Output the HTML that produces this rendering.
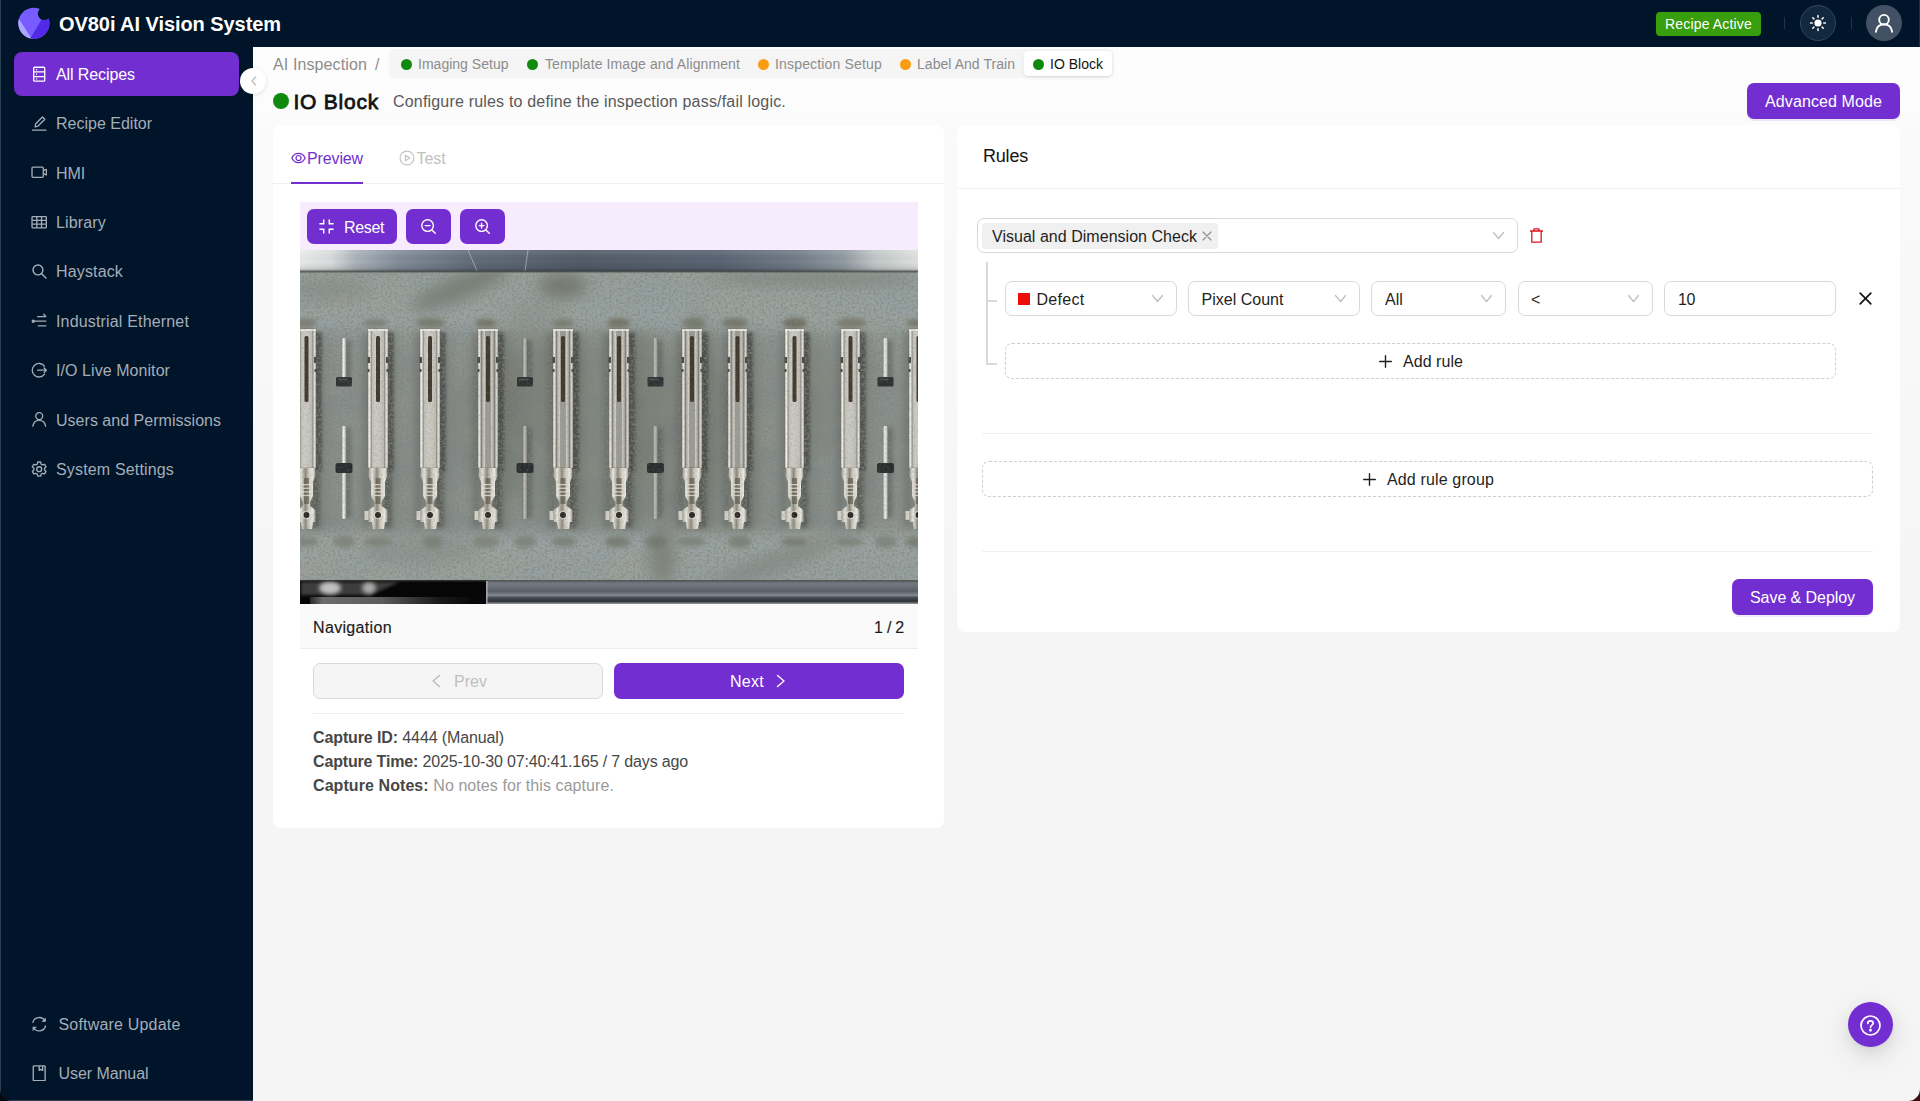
<!DOCTYPE html>
<html lang="en">
<head>
<meta charset="utf-8">
<title>OV80i AI Vision System</title>
<style>
*{box-sizing:border-box;margin:0;padding:0}
html,body{width:1920px;height:1101px;overflow:hidden;background:#f5f5f5;font-family:"Liberation Sans",sans-serif;font-size:16px;color:rgba(0,0,0,.88)}
.abs{position:absolute}
.t{position:absolute;white-space:nowrap;line-height:20px;height:20px;margin-top:1px}
#topbar{position:absolute;left:0;top:0;width:1920px;height:47px;background:#001529}
#side{position:absolute;left:0;top:47px;width:253px;height:1054px;background:#001529}
.mi{position:absolute;left:14px;width:225px;height:44px;border-radius:8px;color:#a4adb8}
.mi svg{position:absolute;left:17px;top:13.800px;width:16.400px;height:16.400px}
.mi .t{left:42px;top:12px}
.mi.sel{background:#722ed1;color:#fff}
#hdr{position:absolute;left:253px;top:47px;width:1667px;height:1054px;background:linear-gradient(#fdfdfd 0,#fcfcfc 60px,#fafafa 90px,#f5f5f5 560px)}
.card{position:absolute;background:#fff;border-radius:8px}
.pbtn{position:absolute;background:#722ed1;border-radius:7px;color:#fff}
.sel2{position:absolute;height:35.600px;margin-top:-.4px;border:1px solid #d9d9d9;border-radius:7px;background:#fff}
.sel2 .t{top:7px}
.sel2 svg.arr{position:absolute;right:12px;top:10px;width:13px;height:13px}
.dash{position:absolute;border:1px dashed #cdcdcd;border-radius:7px;background:#fff}
</style>
</head>
<body>
<!-- TOP BAR -->
<div id="topbar">
  <svg class="abs" style="left:17px;top:7px" width="34" height="34" viewBox="0 0 34 34">
    <defs><clipPath id="lg"><circle cx="16.900" cy="16.300" r="15.600"/></clipPath></defs>
    <g clip-path="url(#lg)">
      <rect width="34" height="34" fill="#785cff"/>
      <path d="M0 8.700 L2.200 12.200 L13.900 30.600 L13.900 34 L0 34Z" fill="#aba6ff"/>
      <path d="M13.900 30.600 L24.200 13 L34 12 L34 34 L13.900 34Z" fill="#5229e8"/>
    </g>
    <circle cx="27.200" cy="6.700" r="6.400" fill="#001529"/>
  </svg>
  <div class="t" style="letter-spacing:-0.065px;left:59px;top:12.500px;font-size:20px;font-weight:bold;color:#fff">OV80i AI Vision System</div>
  <div class="abs" style="left:1656px;top:12px;width:105px;height:24px;background:#389e0d;border-radius:4px"></div>
  <div class="t" style="letter-spacing:0.167px;left:1665px;top:13px;font-size:14px;color:#fff">Recipe Active</div>
  <div class="abs" style="left:1784px;top:17px;width:1px;height:12px;background:#1f3247"></div>
  <div class="abs" style="left:1851px;top:17px;width:1px;height:12px;background:#1f3247"></div>
  <div class="abs" style="left:1800px;top:5px;width:36px;height:36px;border-radius:50%;background:#11283f;border:1px solid #33475c"></div>
  <svg class="abs" style="left:1809px;top:14px" width="18" height="18" viewBox="0 0 18 18" fill="none" stroke="#fff" stroke-width="1.5" stroke-linecap="round">
    <circle cx="9" cy="9" r="3.6" fill="#fff" stroke="none"/>
    <path d="M9 1.6v1.6M9 14.8v1.6M1.6 9h1.6M14.8 9h1.6M3.8 3.8l1.1 1.1M13.1 13.1l1.1 1.1M3.8 14.2l1.1-1.1M13.1 4.9l1.1-1.1"/>
  </svg>
  <div class="abs" style="left:1866px;top:5px;width:36px;height:36px;border-radius:50%;background:#435164"></div>
  <div class="abs" style="left:1919px;top:0;width:1px;height:47px;background:#1c3148"></div>
  <svg class="abs" style="left:1874px;top:12px" width="20" height="22" viewBox="0 0 20 22" fill="none" stroke="#fff" stroke-width="1.9" stroke-linecap="round">
    <circle cx="10" cy="7.700" r="4.800"/><path d="M1.900 19.900c.6-4.800 3.900-7.500 8.100-7.500s7.500 2.700 8.100 7.500"/>
  </svg>
</div>

<!-- SIDEBAR -->
<div id="side">
  <div class="abs" style="left:0;top:-47px;width:1px;height:1101px;background:#2a3e55"></div>
  <div class="abs" style="left:0;bottom:0;width:253px;height:1px;background:#2a3e55"></div>
  <div class="mi sel" style="top:4.8px"><svg viewBox="0 0 16 16" fill="none" stroke="currentColor" stroke-width="1.3"><rect x="2.600" y="1.200" width="10.800" height="13.600" rx="1"/><path d="M2.600 5.700h10.800M2.600 10.300h10.800"/><path d="M4.800 3.500h1.200M4.800 8h1.200M4.800 12.500h1.200" stroke-width="1.200"/></svg><div class="t" style="letter-spacing:-0.094px">All Recipes</div></div>
  <div class="mi" style="top:54.2px"><svg viewBox="0 0 16 16" fill="none" stroke="currentColor" stroke-width="1.300" stroke-linejoin="round" stroke-linecap="round"><path d="M1.500 14.800h13"/><path d="M4 11.500l.6-3 6.600-6.600 2.300 2.300-6.600 6.600z"/></svg><div class="t">Recipe Editor</div></div>
  <div class="mi" style="top:103.6px"><svg viewBox="0 0 16 16" fill="none" stroke="currentColor" stroke-width="1.300" stroke-linejoin="round"><rect x="1" y="3" width="11" height="10" rx="1"/><path d="M12 6.500l3-1.200v5.400l-3-1.200"/></svg><div class="t" style="letter-spacing:-0.109px">HMI</div></div>
  <div class="mi" style="top:153.0px"><svg viewBox="0 0 16 16" fill="none" stroke="currentColor" stroke-width="1.300"><rect x="1" y="2.500" width="14" height="11" rx=".8"/><path d="M1 6.200h14M1 9.900h14M5.700 2.500v11M10.300 2.500v11"/></svg><div class="t" style="letter-spacing:0.156px">Library</div></div>
  <div class="mi" style="top:202.4px"><svg viewBox="0 0 16 16" fill="none" stroke="currentColor" stroke-width="1.400" stroke-linecap="round"><circle cx="6.800" cy="6.800" r="4.800"/><path d="M10.400 10.400l4.200 4.200"/></svg><div class="t" style="letter-spacing:0.150px">Haystack</div></div>
  <div class="mi" style="top:251.8px"><svg viewBox="0 0 16 16" fill="none" stroke="currentColor" stroke-width="1.300" stroke-linecap="round" stroke-linejoin="round"><path d="M6.500 3.500h8M12.300 1.300l2.200 2.200M3.500 8h11M7 12.500h7.500"/><circle cx="2.200" cy="8" r="1" fill="currentColor"/></svg><div class="t" style="letter-spacing:0.165px">Industrial Ethernet</div></div>
  <div class="mi" style="top:301.2px"><svg viewBox="0 0 16 16" fill="none" stroke="currentColor" stroke-width="1.300" stroke-linecap="round" stroke-linejoin="round"><path d="M13.200 4.200A6.600 6.600 0 1 0 13.200 11.800"/><path d="M6.500 8h8.500M12.800 5.800L15 8l-2.200 2.200"/></svg><div class="t" style="letter-spacing:0.066px">I/O Live Monitor</div></div>
  <div class="mi" style="top:350.6px"><svg viewBox="0 0 16 16" fill="none" stroke="currentColor" stroke-width="1.300" stroke-linecap="round"><circle cx="8" cy="5" r="3.400"/><path d="M1.800 14.800c.6-3.600 3-5.600 6.200-5.600s5.600 2 6.200 5.600"/></svg><div class="t" style="letter-spacing:0.024px">Users and Permissions</div></div>
  <div class="mi" style="top:400.0px"><svg viewBox="0 0 16 16" fill="none" stroke="currentColor" stroke-width="1.300" stroke-linejoin="round"><path d="M6.600 1h2.800l.5 2 1.400.8 2-.6 1.400 2.400-1.500 1.500v1.600l1.500 1.500-1.400 2.400-2-.6-1.400.8-.5 2H6.600l-.5-2-1.400-.8-2 .6-1.400-2.400 1.500-1.500V7.100L1.300 5.600l1.400-2.400 2 .6 1.400-.8z"/><circle cx="8" cy="8" r="2.400"/></svg><div class="t" style="letter-spacing:0.159px">System Settings</div></div>
  <div class="mi" style="top:955.3px"><svg style="left:16.500px" viewBox="0 0 16 16" fill="none" stroke="currentColor" stroke-width="1.300" stroke-linecap="round" stroke-linejoin="round"><path d="M1.800 6.200A6.400 6.400 0 0 1 13.600 4.800M14.200 9.800A6.400 6.400 0 0 1 2.400 11.200"/><path d="M13.900 2.200v2.900H11M2.100 13.800v-2.900H5" fill="currentColor" stroke-width="1"/></svg><div class="t" style="letter-spacing:0.188px;left:44.500px">Software Update</div></div>
  <div class="mi" style="top:1004.3px"><svg style="left:16.500px" viewBox="0 0 16 16" fill="none" stroke="currentColor" stroke-width="1.300" stroke-linejoin="round"><rect x="2.200" y=".8" width="11.600" height="14.400" rx=".6"/><path d="M8 1v4.200l1.700-1 1.700 1V1"/></svg><div class="t" style="letter-spacing:-0.064px;left:44.500px">User Manual</div></div>
</div>

<!-- HEADER STRIP -->
<div id="hdr"></div>
<div class="abs" style="left:240.200px;top:67.600px;width:26px;height:26px;border-radius:50%;background:#fff;box-shadow:0 1px 4px rgba(0,0,0,.12)"></div>
<svg class="abs" style="left:249px;top:74.500px" width="10" height="12" viewBox="0 0 10 12" fill="none" stroke="#bfbfbf" stroke-width="1.3" stroke-linecap="round" stroke-linejoin="round"><path d="M6.500 2 L3 6 L6.500 10"/></svg>

<div class="t" style="letter-spacing:0.115px;left:273px;top:53.500px;color:#8c8c8c">AI Inspection</div>
<div class="t" style="left:375px;top:53.500px;color:#8c8c8c">/</div>
<div class="abs" style="left:389px;top:49px;width:725px;height:29px;background:#f5f5f5;border-radius:6px"></div>
<div class="abs" style="left:1024px;top:51px;width:88px;height:25px;background:#fff;border-radius:4px;box-shadow:0 2px 6px -2px rgba(0,0,0,.1),0 1px 2px rgba(0,0,0,.06)"></div>
<div class="abs" style="left:400.5px;top:58.500px;width:11px;height:11px;border-radius:50%;background:#0f8a0f"></div>
<div class="t" style="letter-spacing:0.016px;left:418px;top:53px;font-size:14px;color:#8c8c8c">Imaging Setup</div>
<div class="abs" style="left:527.0px;top:58.500px;width:11px;height:11px;border-radius:50%;background:#0f8a0f"></div>
<div class="t" style="letter-spacing:0.099px;left:545px;top:53px;font-size:14px;color:#8c8c8c">Template Image and Alignment</div>
<div class="abs" style="left:757.5px;top:58.500px;width:11px;height:11px;border-radius:50%;background:#fa9d14"></div>
<div class="t" style="letter-spacing:0.169px;left:775px;top:53px;font-size:14px;color:#8c8c8c">Inspection Setup</div>
<div class="abs" style="left:899.5px;top:58.500px;width:11px;height:11px;border-radius:50%;background:#fa9d14"></div>
<div class="t" style="letter-spacing:0.047px;left:917px;top:53px;font-size:14px;color:#8c8c8c">Label And Train</div>
<div class="abs" style="left:1032.5px;top:58.500px;width:11px;height:11px;border-radius:50%;background:#0f8a0f"></div>
<div class="t" style="letter-spacing:0.012px;left:1050px;top:53px;font-size:14px;color:#141414">IO Block</div>

<div class="abs" style="left:273px;top:93px;width:16px;height:16px;border-radius:50%;background:#0f8a0f"></div>
<div class="t" style="letter-spacing:0.768px;left:293.500px;top:86.800px;font-size:21px;-webkit-text-stroke:.8px #141414;line-height:28px;height:28px;color:#141414">IO Block</div>
<div class="t" style="letter-spacing:0.185px;left:393px;top:90.500px;color:#595959">Configure rules to define the inspection pass/fail logic.</div>
<div class="pbtn" style="left:1747px;top:83px;width:153px;height:36px;box-shadow:0 2px 0 rgba(114,46,209,.1)"></div>
<div class="t" style="letter-spacing:0.105px;left:1765px;top:91px;color:#fff">Advanced Mode</div>

<!-- LEFT CARD -->
<div class="card" style="left:273px;top:125px;width:671px;height:703px"></div>
<div class="abs" style="left:273px;top:183px;width:671px;height:1px;background:#f0f0f0"></div>
<div class="abs" style="left:291px;top:181.500px;width:72px;height:2px;background:#722ed1"></div>
<svg class="abs" style="left:291px;top:151px" width="15" height="14" viewBox="0 0 15 14" fill="none" stroke="#722ed1" stroke-width="1.2"><path d="M.8 7C2.300 3.900 4.700 2.400 7.500 2.400S12.700 3.900 14.200 7c-1.500 3.100-3.900 4.600-6.700 4.600S2.300 10.100.8 7Z"/><circle cx="7.500" cy="7" r="2.500"/></svg>
<div class="t" style="letter-spacing:-0.129px;left:307px;top:148px;color:#722ed1">Preview</div>
<svg class="abs" style="left:399px;top:150px" width="16" height="16" viewBox="0 0 16 16" fill="none" stroke="#c4c4c4" stroke-width="1.2" stroke-linejoin="round"><circle cx="8" cy="8" r="6.900"/><path d="M6.400 5.200v5.600l4.400-2.800z"/></svg>
<div class="t" style="letter-spacing:-0.086px;left:416.500px;top:148px;color:#bfbfbf">Test</div>

<div class="abs" style="left:300px;top:202px;width:618px;height:48px;background:#f7ecfe"></div>
<div class="pbtn" style="left:307px;top:209px;width:90px;height:35px"></div>
<svg class="abs" style="left:319px;top:219px" width="15" height="15" viewBox="0 0 15 15" fill="none" stroke="#fff" stroke-width="1.500"><path d="M.4 4.700H4.700V.4M10.300 .4V4.700H14.600M14.600 10.300H10.300V14.600M4.700 14.600V10.300H.4"/></svg>
<div class="t" style="letter-spacing:-0.359px;left:344px;top:217px;color:#fff">Reset</div>
<div class="pbtn" style="left:406px;top:209px;width:45px;height:35px"></div>
<svg class="abs" style="left:420px;top:218px" width="17" height="17" viewBox="0 0 17 17" fill="none" stroke="#fff" stroke-width="1.400" stroke-linecap="round"><circle cx="7.600" cy="7.600" r="5.800"/><path d="M11.900 11.900l3.400 3.400M5.200 7.600h4.800"/></svg>
<div class="pbtn" style="left:460px;top:209px;width:45px;height:35px"></div>
<svg class="abs" style="left:474px;top:218px" width="17" height="17" viewBox="0 0 17 17" fill="none" stroke="#fff" stroke-width="1.400" stroke-linecap="round"><circle cx="7.600" cy="7.600" r="5.800"/><path d="M11.900 11.900l3.400 3.400M5.200 7.600h4.800M7.600 5.200v4.800"/></svg>

<svg class="abs" style="left:300px;top:250px" width="618" height="354" viewBox="0 0 618 354">
<defs>
<linearGradient id="tb" x1="0" x2="1" y1="0" y2="0">
 <stop offset="0" stop-color="#e9ebea"/><stop offset=".05" stop-color="#d8dcdc"/><stop offset=".09" stop-color="#a9b1b8"/>
 <stop offset=".16" stop-color="#808a97"/><stop offset=".28" stop-color="#5e6876"/><stop offset=".45" stop-color="#4f5865"/><stop offset=".68" stop-color="#566070"/>
 <stop offset=".8" stop-color="#6e7884"/><stop offset=".88" stop-color="#8f989f"/><stop offset=".93" stop-color="#c0c6c6"/><stop offset="1" stop-color="#dfe2e0"/>
</linearGradient>
<linearGradient id="tbv" x1="0" x2="0" y1="0" y2="1">
 <stop offset="0" stop-color="#fff" stop-opacity=".1"/><stop offset=".12" stop-color="#fff" stop-opacity=".08"/><stop offset=".55" stop-color="#000" stop-opacity="0"/>
 <stop offset=".8" stop-color="#000" stop-opacity=".08"/><stop offset="1" stop-color="#000" stop-opacity=".3"/>
</linearGradient>
<linearGradient id="slab" x1="0" x2="0" y1="0" y2="1">
 <stop offset="0" stop-color="#949e9e"/><stop offset=".15" stop-color="#98a2a3"/><stop offset=".3" stop-color="#8c9495"/><stop offset=".8" stop-color="#8b9394"/><stop offset=".88" stop-color="#99a3a4"/><stop offset="1" stop-color="#959fa0"/>
</linearGradient>
<linearGradient id="bb" x1="0" x2="0" y1="0" y2="1">
 <stop offset="0" stop-color="#6a6e77"/><stop offset=".15" stop-color="#737781"/><stop offset=".45" stop-color="#5a5e67"/><stop offset=".62" stop-color="#858991"/><stop offset=".72" stop-color="#4a4d55"/><stop offset=".88" stop-color="#303238"/><stop offset="1" stop-color="#6a6d73"/>
</linearGradient>
<linearGradient id="blk" x1="0" x2="1" y1="0" y2="0">
 <stop offset="0" stop-color="#2a2a2a"/><stop offset=".08" stop-color="#6c6c6c"/><stop offset=".45" stop-color="#5c5c5c"/><stop offset=".8" stop-color="#1a1a1a"/><stop offset="1" stop-color="#0a0a0a"/>
</linearGradient>
<linearGradient id="pinL" x1="0" x2="1" y1="0" y2="0">
 <stop offset="0" stop-color="#e9e8e3"/><stop offset=".1" stop-color="#eeede8"/><stop offset=".16" stop-color="#8f8c84"/><stop offset=".22" stop-color="#c2c0b9"/><stop offset=".36" stop-color="#cdcbc5"/>
 <stop offset=".64" stop-color="#c8c6c0"/><stop offset=".78" stop-color="#bdbbb4"/><stop offset=".84" stop-color="#8b8880"/><stop offset=".9" stop-color="#e8e7e2"/><stop offset="1" stop-color="#c9c7c0"/>
</linearGradient>
<linearGradient id="pinD" x1="0" x2="1" y1="0" y2="0">
 <stop offset="0" stop-color="#e2e1dc"/><stop offset=".1" stop-color="#e6e5e0"/><stop offset=".16" stop-color="#77756e"/><stop offset=".22" stop-color="#a9a8a1"/><stop offset=".32" stop-color="#d2d1cb"/><stop offset=".38" stop-color="#9c9b94"/>
 <stop offset=".62" stop-color="#9c9b94"/><stop offset=".68" stop-color="#cecdc7"/><stop offset=".78" stop-color="#a3a29b"/><stop offset=".84" stop-color="#77756e"/><stop offset=".9" stop-color="#dfded8"/><stop offset="1" stop-color="#bab8b1"/>
</linearGradient>
<linearGradient id="crimp" x1="0" x2="1" y1="0" y2="0">
 <stop offset="0" stop-color="#a9a69c"/><stop offset=".2" stop-color="#e8e6de"/><stop offset=".45" stop-color="#8c887c"/><stop offset=".6" stop-color="#c9c6bc"/><stop offset=".85" stop-color="#ebe9e2"/><stop offset="1" stop-color="#9b988e"/>
</linearGradient>
<linearGradient id="sp" x1="0" x2="1" y1="0" y2="0">
 <stop offset="0" stop-color="#8f8f8a"/><stop offset=".35" stop-color="#f0f0ec"/><stop offset=".7" stop-color="#cfcfca"/><stop offset="1" stop-color="#777"/>
</linearGradient>
<linearGradient id="spd" x1="0" x2="1" y1="0" y2="0">
 <stop offset="0" stop-color="#77776f"/><stop offset=".35" stop-color="#c2c2bc"/><stop offset=".7" stop-color="#a3a39d"/><stop offset="1" stop-color="#666"/>
</linearGradient>
<filter id="b15" x="-80%" y="-20%" width="260%" height="140%"><feGaussianBlur stdDeviation="1.600"/></filter>
<filter id="b2" x="-50%" y="-50%" width="200%" height="200%"><feGaussianBlur stdDeviation="2"/></filter>
<filter id="b4" x="-50%" y="-50%" width="200%" height="200%"><feGaussianBlur stdDeviation="4"/></filter>
<filter id="b7" x="-50%" y="-50%" width="200%" height="200%"><feGaussianBlur stdDeviation="7"/></filter>
<filter id="grain" x="0" y="0" width="100%" height="100%">
 <feTurbulence type="fractalNoise" baseFrequency=".42" numOctaves="4" seed="3" result="n"/>
 <feColorMatrix type="matrix" values="0 0 0 0 0.22  0 0 0 0 0.23  0 0 0 0 0.19  2.2 2.2 2.2 0 -3.05"/>
</filter>
<filter id="cloud" x="0" y="0" width="100%" height="100%">
 <feTurbulence type="fractalNoise" baseFrequency=".018 .03" numOctaves="3" seed="11"/>
 <feColorMatrix type="matrix" values="0 0 0 0 0.36  0 0 0 0 0.37  0 0 0 0 0.31  1.6 1.2 0 0 -1.15"/>
</filter>
<clipPath id="pc"><rect width="618" height="354"/></clipPath>
</defs>
<g clip-path="url(#pc)">
<rect x="0" y="20" width="618" height="312" fill="url(#slab)"/>
<rect x="0" y="20" width="618" height="312" filter="url(#cloud)" opacity=".55"/>
<ellipse cx="300" cy="175" rx="150" ry="95" fill="#66685c" opacity=".16" filter="url(#b7)"/>
<ellipse cx="235" cy="120" rx="45" ry="70" fill="#66685c" opacity=".15" filter="url(#b7)"/>
<ellipse cx="400" cy="200" rx="60" ry="80" fill="#66685c" opacity=".12" filter="url(#b7)"/>
<rect x="0" y="82" width="618" height="200" fill="#5f6156" opacity=".1" filter="url(#b4)"/>
<ellipse cx="160" cy="38" rx="52" ry="11" transform="rotate(-22 160 38)" fill="#5f6355" opacity="0.55" filter="url(#b7)"/>
<ellipse cx="262" cy="36" rx="24" ry="13" transform="rotate(0 262 36)" fill="#5f6355" opacity="0.62" filter="url(#b7)"/>
<ellipse cx="510" cy="29" rx="105" ry="6" transform="rotate(0 510 29)" fill="#5f6355" opacity="0.4" filter="url(#b7)"/>
<ellipse cx="30" cy="40" rx="40" ry="12" transform="rotate(0 30 40)" fill="#5f6355" opacity="0.2" filter="url(#b7)"/>
<ellipse cx="362" cy="305" rx="14" ry="30" transform="rotate(0 362 305)" fill="#5f6355" opacity="0.45" filter="url(#b7)"/>
<ellipse cx="400" cy="100" rx="10" ry="40" transform="rotate(0 400 100)" fill="#5f6355" opacity="0.25" filter="url(#b7)"/>
<ellipse cx="345" cy="150" rx="18" ry="70" transform="rotate(0 345 150)" fill="#5f6355" opacity="0.18" filter="url(#b7)"/>
<ellipse cx="520" cy="150" rx="18" ry="60" transform="rotate(0 520 150)" fill="#5f6355" opacity="0.15" filter="url(#b7)"/>
<ellipse cx="215" cy="180" rx="14" ry="70" transform="rotate(0 215 180)" fill="#5f6355" opacity="0.18" filter="url(#b7)"/>
<ellipse cx="120" cy="300" rx="60" ry="14" transform="rotate(0 120 300)" fill="#5f6355" opacity="0.2" filter="url(#b7)"/>
<ellipse cx="480" cy="310" rx="70" ry="10" transform="rotate(-20 480 310)" fill="#5f6355" opacity="0.3" filter="url(#b7)"/>
<ellipse cx="5.4" cy="73" rx="10.8" ry="4.8" fill="#5e5a44" opacity="0.47" filter="url(#b2)"/>
<ellipse cx="6.7" cy="292" rx="11.8" ry="4.2" fill="#5c5f4e" opacity="0.43" filter="url(#b2)"/>
<ellipse cx="75.2" cy="73" rx="12.2" ry="3.6" fill="#5e5a44" opacity="0.47" filter="url(#b2)"/>
<ellipse cx="77.5" cy="292" rx="14.1" ry="4.4" fill="#5c5f4e" opacity="0.36" filter="url(#b2)"/>
<ellipse cx="130.8" cy="73" rx="14.7" ry="4.7" fill="#5e5a44" opacity="0.55" filter="url(#b2)"/>
<ellipse cx="132.9" cy="292" rx="10.2" ry="6.6" fill="#5c5f4e" opacity="0.37" filter="url(#b2)"/>
<ellipse cx="185.9" cy="73" rx="10.6" ry="4.1" fill="#5e5a44" opacity="0.65" filter="url(#b2)"/>
<ellipse cx="186.1" cy="292" rx="12.9" ry="5.9" fill="#5c5f4e" opacity="0.39" filter="url(#b2)"/>
<ellipse cx="263.3" cy="73" rx="10.3" ry="3.6" fill="#5e5a44" opacity="0.50" filter="url(#b2)"/>
<ellipse cx="264.1" cy="292" rx="12.1" ry="4.9" fill="#5c5f4e" opacity="0.45" filter="url(#b2)"/>
<ellipse cx="318.7" cy="73" rx="11.5" ry="5.1" fill="#5e5a44" opacity="0.62" filter="url(#b2)"/>
<ellipse cx="317.5" cy="292" rx="12.9" ry="5.6" fill="#5c5f4e" opacity="0.52" filter="url(#b2)"/>
<ellipse cx="393.4" cy="73" rx="11.4" ry="5.5" fill="#5e5a44" opacity="0.48" filter="url(#b2)"/>
<ellipse cx="391.5" cy="292" rx="13.8" ry="4.5" fill="#5c5f4e" opacity="0.42" filter="url(#b2)"/>
<ellipse cx="434.7" cy="73" rx="13.3" ry="5.0" fill="#5e5a44" opacity="0.59" filter="url(#b2)"/>
<ellipse cx="439.8" cy="292" rx="11.6" ry="6.1" fill="#5c5f4e" opacity="0.45" filter="url(#b2)"/>
<ellipse cx="495.0" cy="73" rx="12.3" ry="5.2" fill="#5e5a44" opacity="0.69" filter="url(#b2)"/>
<ellipse cx="494.3" cy="292" rx="13.3" ry="4.2" fill="#5c5f4e" opacity="0.48" filter="url(#b2)"/>
<ellipse cx="551.4" cy="73" rx="15.0" ry="5.1" fill="#5e5a44" opacity="0.52" filter="url(#b2)"/>
<ellipse cx="549.8" cy="292" rx="13.3" ry="4.1" fill="#5c5f4e" opacity="0.42" filter="url(#b2)"/>
<ellipse cx="616.5" cy="73" rx="10.6" ry="3.6" fill="#5e5a44" opacity="0.64" filter="url(#b2)"/>
<ellipse cx="616.3" cy="292" rx="11.2" ry="5.2" fill="#5c5f4e" opacity="0.52" filter="url(#b2)"/>
<ellipse cx="44.0" cy="292" rx="11" ry="6" fill="#5c5f4e" opacity=".4" filter="url(#b2)"/>
<ellipse cx="225.0" cy="292" rx="11" ry="6" fill="#5c5f4e" opacity=".4" filter="url(#b2)"/>
<ellipse cx="355.5" cy="292" rx="11" ry="6" fill="#5c5f4e" opacity=".4" filter="url(#b2)"/>
<ellipse cx="585.5" cy="292" rx="11" ry="6" fill="#5c5f4e" opacity=".4" filter="url(#b2)"/>
<rect x="-10" y="84" width="38" height="196" fill="#5a5c50" opacity="0.17" filter="url(#b4)"/>
<rect x="14" y="82" width="8" height="140" fill="#3a3e3a" opacity=".7" filter="url(#b15)"/>
<rect x="11" y="222" width="9" height="56" fill="#3a3e3a" opacity=".55" filter="url(#b2)"/>
<rect x="-8" y="82" width="7" height="195" fill="#4a4f4f" opacity=".22" filter="url(#b2)"/>
<rect x="61" y="84" width="39" height="196" fill="#5a5c50" opacity="0.17" filter="url(#b4)"/>
<rect x="86" y="82" width="8" height="140" fill="#3a3e3a" opacity=".7" filter="url(#b15)"/>
<rect x="83" y="222" width="9" height="56" fill="#3a3e3a" opacity=".55" filter="url(#b2)"/>
<rect x="63" y="82" width="7" height="195" fill="#4a4f4f" opacity=".22" filter="url(#b2)"/>
<rect x="113" y="84" width="39" height="196" fill="#5a5c50" opacity="0.17" filter="url(#b4)"/>
<rect x="138" y="82" width="8" height="140" fill="#3a3e3a" opacity=".7" filter="url(#b15)"/>
<rect x="135" y="222" width="9" height="56" fill="#3a3e3a" opacity=".55" filter="url(#b2)"/>
<rect x="115" y="82" width="7" height="195" fill="#4a4f4f" opacity=".22" filter="url(#b2)"/>
<rect x="171" y="84" width="39" height="196" fill="#5a5c50" opacity="0.27" filter="url(#b4)"/>
<rect x="196" y="82" width="8" height="140" fill="#3a3e3a" opacity=".7" filter="url(#b15)"/>
<rect x="193" y="222" width="9" height="56" fill="#3a3e3a" opacity=".55" filter="url(#b2)"/>
<rect x="173" y="82" width="7" height="195" fill="#4a4f4f" opacity=".22" filter="url(#b2)"/>
<rect x="246" y="84" width="39" height="196" fill="#5a5c50" opacity="0.27" filter="url(#b4)"/>
<rect x="271" y="82" width="8" height="140" fill="#3a3e3a" opacity=".7" filter="url(#b15)"/>
<rect x="268" y="222" width="9" height="56" fill="#3a3e3a" opacity=".55" filter="url(#b2)"/>
<rect x="248" y="82" width="7" height="195" fill="#4a4f4f" opacity=".22" filter="url(#b2)"/>
<rect x="302" y="84" width="39" height="196" fill="#5a5c50" opacity="0.27" filter="url(#b4)"/>
<rect x="327" y="82" width="8" height="140" fill="#3a3e3a" opacity=".7" filter="url(#b15)"/>
<rect x="324" y="222" width="9" height="56" fill="#3a3e3a" opacity=".55" filter="url(#b2)"/>
<rect x="304" y="82" width="7" height="195" fill="#4a4f4f" opacity=".22" filter="url(#b2)"/>
<rect x="375" y="84" width="39" height="196" fill="#5a5c50" opacity="0.27" filter="url(#b4)"/>
<rect x="400" y="82" width="8" height="140" fill="#3a3e3a" opacity=".7" filter="url(#b15)"/>
<rect x="397" y="222" width="9" height="56" fill="#3a3e3a" opacity=".55" filter="url(#b2)"/>
<rect x="377" y="82" width="7" height="195" fill="#4a4f4f" opacity=".22" filter="url(#b2)"/>
<rect x="421" y="84" width="38" height="196" fill="#5a5c50" opacity="0.27" filter="url(#b4)"/>
<rect x="445" y="82" width="8" height="140" fill="#3a3e3a" opacity=".7" filter="url(#b15)"/>
<rect x="442" y="222" width="9" height="56" fill="#3a3e3a" opacity=".55" filter="url(#b2)"/>
<rect x="423" y="82" width="7" height="195" fill="#4a4f4f" opacity=".22" filter="url(#b2)"/>
<rect x="478" y="84" width="38" height="196" fill="#5a5c50" opacity="0.17" filter="url(#b4)"/>
<rect x="502" y="82" width="8" height="140" fill="#3a3e3a" opacity=".7" filter="url(#b15)"/>
<rect x="499" y="222" width="9" height="56" fill="#3a3e3a" opacity=".55" filter="url(#b2)"/>
<rect x="480" y="82" width="7" height="195" fill="#4a4f4f" opacity=".22" filter="url(#b2)"/>
<rect x="534" y="84" width="38" height="196" fill="#5a5c50" opacity="0.17" filter="url(#b4)"/>
<rect x="558" y="82" width="8" height="140" fill="#3a3e3a" opacity=".7" filter="url(#b15)"/>
<rect x="555" y="222" width="9" height="56" fill="#3a3e3a" opacity=".55" filter="url(#b2)"/>
<rect x="536" y="82" width="7" height="195" fill="#4a4f4f" opacity=".22" filter="url(#b2)"/>
<rect x="602" y="84" width="38" height="196" fill="#5a5c50" opacity="0.17" filter="url(#b4)"/>
<rect x="626" y="82" width="8" height="140" fill="#3a3e3a" opacity=".7" filter="url(#b15)"/>
<rect x="623" y="222" width="9" height="56" fill="#3a3e3a" opacity=".55" filter="url(#b2)"/>
<rect x="604" y="82" width="7" height="195" fill="#4a4f4f" opacity=".22" filter="url(#b2)"/>
<rect x="44" y="90" width="7" height="40" fill="#3f4444" opacity=".45" filter="url(#b2)"/>
<rect x="44" y="178" width="7" height="90" fill="#3f4444" opacity=".45" filter="url(#b2)"/>
<rect x="225" y="90" width="7" height="40" fill="#3f4444" opacity=".45" filter="url(#b2)"/>
<rect x="225" y="178" width="7" height="90" fill="#3f4444" opacity=".45" filter="url(#b2)"/>
<rect x="355.5" y="90" width="7" height="40" fill="#3f4444" opacity=".45" filter="url(#b2)"/>
<rect x="355.5" y="178" width="7" height="90" fill="#3f4444" opacity=".45" filter="url(#b2)"/>
<rect x="585.5" y="90" width="7" height="40" fill="#3f4444" opacity=".45" filter="url(#b2)"/>
<rect x="585.5" y="178" width="7" height="90" fill="#3f4444" opacity=".45" filter="url(#b2)"/>
<rect x="0" y="20" width="618" height="312" filter="url(#grain)" opacity=".55"/>
<rect x="41.5" y="88" width="5" height="42" rx="2" fill="url(#sp)"/>
<rect x="36" y="127" width="16" height="9.500" rx="1.500" fill="#2e3032"/>
<rect x="38" y="128.500" width="9" height="2" fill="#55585a" opacity=".7"/>
<rect x="41.5" y="176" width="5" height="93" rx="2" fill="url(#sp)"/>
<rect x="35.5" y="213" width="17" height="10" rx="2" fill="#2a2c2e"/>
<rect x="222.5" y="88" width="5" height="42" rx="2" fill="url(#spd)"/>
<rect x="217" y="127" width="16" height="9.500" rx="1.500" fill="#2e3032"/>
<rect x="219" y="128.500" width="9" height="2" fill="#55585a" opacity=".7"/>
<rect x="222.5" y="176" width="5" height="93" rx="2" fill="url(#spd)"/>
<rect x="216.5" y="213" width="17" height="10" rx="2" fill="#2a2c2e"/>
<rect x="353.0" y="88" width="5" height="42" rx="2" fill="url(#spd)"/>
<rect x="347.5" y="127" width="16" height="9.500" rx="1.500" fill="#2e3032"/>
<rect x="349.5" y="128.500" width="9" height="2" fill="#55585a" opacity=".7"/>
<rect x="353.0" y="176" width="5" height="93" rx="2" fill="url(#spd)"/>
<rect x="347.0" y="213" width="17" height="10" rx="2" fill="#2a2c2e"/>
<rect x="583.0" y="88" width="5" height="42" rx="2" fill="url(#sp)"/>
<rect x="577.5" y="127" width="16" height="9.500" rx="1.500" fill="#2e3032"/>
<rect x="579.5" y="128.500" width="9" height="2" fill="#55585a" opacity=".7"/>
<rect x="583.0" y="176" width="5" height="93" rx="2" fill="url(#sp)"/>
<rect x="577.0" y="213" width="17" height="10" rx="2" fill="#2a2c2e"/>
<rect x="-3" y="79" width="19" height="139" fill="url(#pinL)" stroke="#5d5b53" stroke-width=".6" stroke-opacity=".7"/>
<rect x="-3" y="79" width="19" height="2" fill="#f2f1ec" opacity=".8"/>
<rect x="4.5" y="86" width="4" height="66" rx="1.500" fill="#40392e"/>
<rect x="-3.5" y="107" width="2.500" height="6" fill="#4a4a44"/><rect x="14" y="107" width="2.500" height="6" fill="#4a4a44"/>
<rect x="-3.5" y="119" width="2" height="3" fill="#4a4a44"/><rect x="14.5" y="119" width="2" height="3" fill="#4a4a44"/>
<path d="M-2 218 H15 L15.5 226 L13 232 L13 246 L10.0 252 L10.0 256 L15.5 260 L15.5 272 L13 272 L12 279 L2 279 L1 272 L-2.5 272 L-2.5 260 L3.0 256 L3.0 252 L0 246 L0 232 L-2.5 226 Z" fill="url(#crimp)"/>
<rect x="4.0" y="228" width="5" height="26" fill="#5e5a4c" opacity=".7"/>
<rect x="1.5" y="234.0" width="10" height="1.300" fill="#e4e2da" opacity=".85"/>
<rect x="1.5" y="237.6" width="10" height="1.300" fill="#e4e2da" opacity=".85"/>
<rect x="1.5" y="241.2" width="10" height="1.300" fill="#e4e2da" opacity=".85"/>
<rect x="1.5" y="244.8" width="10" height="1.300" fill="#e4e2da" opacity=".85"/>
<circle cx="6.5" cy="265" r="3" fill="#2c2a26"/>
<circle cx="6.5" cy="265" r="3.800" fill="none" stroke="#efeee8" stroke-width=".8" opacity=".8"/>
<rect x="-6.5" y="261" width="4" height="9" fill="#d4d2ca"/>
<rect x="68" y="79" width="20" height="139" fill="url(#pinL)" stroke="#5d5b53" stroke-width=".6" stroke-opacity=".7"/>
<rect x="68" y="79" width="20" height="2" fill="#f2f1ec" opacity=".8"/>
<rect x="76.0" y="86" width="4" height="66" rx="1.500" fill="#40392e"/>
<rect x="67.5" y="107" width="2.500" height="6" fill="#4a4a44"/><rect x="86" y="107" width="2.500" height="6" fill="#4a4a44"/>
<rect x="67.5" y="119" width="2" height="3" fill="#4a4a44"/><rect x="86.5" y="119" width="2" height="3" fill="#4a4a44"/>
<path d="M69 218 H87 L87.5 226 L85 232 L85 246 L81.5 252 L81.5 256 L87.5 260 L87.5 272 L85 272 L84 279 L73 279 L72 272 L68.5 272 L68.5 260 L74.5 256 L74.5 252 L71 246 L71 232 L68.5 226 Z" fill="url(#crimp)"/>
<rect x="75.5" y="228" width="5" height="26" fill="#5e5a4c" opacity=".7"/>
<rect x="73.0" y="234.0" width="10" height="1.300" fill="#e4e2da" opacity=".85"/>
<rect x="73.0" y="237.6" width="10" height="1.300" fill="#e4e2da" opacity=".85"/>
<rect x="73.0" y="241.2" width="10" height="1.300" fill="#e4e2da" opacity=".85"/>
<rect x="73.0" y="244.8" width="10" height="1.300" fill="#e4e2da" opacity=".85"/>
<circle cx="78.0" cy="265" r="3" fill="#2c2a26"/>
<circle cx="78.0" cy="265" r="3.800" fill="none" stroke="#efeee8" stroke-width=".8" opacity=".8"/>
<rect x="64.5" y="261" width="4" height="9" fill="#d4d2ca"/>
<rect x="120" y="79" width="20" height="139" fill="url(#pinL)" stroke="#5d5b53" stroke-width=".6" stroke-opacity=".7"/>
<rect x="120" y="79" width="20" height="2" fill="#f2f1ec" opacity=".8"/>
<rect x="128.0" y="86" width="4" height="66" rx="1.500" fill="#40392e"/>
<rect x="119.5" y="107" width="2.500" height="6" fill="#4a4a44"/><rect x="138" y="107" width="2.500" height="6" fill="#4a4a44"/>
<rect x="119.5" y="119" width="2" height="3" fill="#4a4a44"/><rect x="138.5" y="119" width="2" height="3" fill="#4a4a44"/>
<path d="M121 218 H139 L139.5 226 L137 232 L137 246 L133.5 252 L133.5 256 L139.5 260 L139.5 272 L137 272 L136 279 L125 279 L124 272 L120.5 272 L120.5 260 L126.5 256 L126.5 252 L123 246 L123 232 L120.5 226 Z" fill="url(#crimp)"/>
<rect x="127.5" y="228" width="5" height="26" fill="#5e5a4c" opacity=".7"/>
<rect x="125.0" y="234.0" width="10" height="1.300" fill="#e4e2da" opacity=".85"/>
<rect x="125.0" y="237.6" width="10" height="1.300" fill="#e4e2da" opacity=".85"/>
<rect x="125.0" y="241.2" width="10" height="1.300" fill="#e4e2da" opacity=".85"/>
<rect x="125.0" y="244.8" width="10" height="1.300" fill="#e4e2da" opacity=".85"/>
<circle cx="130.0" cy="265" r="3" fill="#2c2a26"/>
<circle cx="130.0" cy="265" r="3.800" fill="none" stroke="#efeee8" stroke-width=".8" opacity=".8"/>
<rect x="116.5" y="261" width="4" height="9" fill="#d4d2ca"/>
<rect x="178" y="79" width="20" height="139" fill="url(#pinD)" stroke="#5d5b53" stroke-width=".6" stroke-opacity=".7"/>
<rect x="178" y="79" width="20" height="2" fill="#f2f1ec" opacity=".8"/>
<rect x="186.0" y="86" width="4" height="66" rx="1.500" fill="#40392e"/>
<rect x="177.5" y="107" width="2.500" height="6" fill="#4a4a44"/><rect x="196" y="107" width="2.500" height="6" fill="#4a4a44"/>
<rect x="177.5" y="119" width="2" height="3" fill="#4a4a44"/><rect x="196.5" y="119" width="2" height="3" fill="#4a4a44"/>
<path d="M179 218 H197 L197.5 226 L195 232 L195 246 L191.5 252 L191.5 256 L197.5 260 L197.5 272 L195 272 L194 279 L183 279 L182 272 L178.5 272 L178.5 260 L184.5 256 L184.5 252 L181 246 L181 232 L178.5 226 Z" fill="url(#crimp)"/>
<rect x="185.5" y="228" width="5" height="26" fill="#5e5a4c" opacity=".7"/>
<rect x="183.0" y="234.0" width="10" height="1.300" fill="#e4e2da" opacity=".85"/>
<rect x="183.0" y="237.6" width="10" height="1.300" fill="#e4e2da" opacity=".85"/>
<rect x="183.0" y="241.2" width="10" height="1.300" fill="#e4e2da" opacity=".85"/>
<rect x="183.0" y="244.8" width="10" height="1.300" fill="#e4e2da" opacity=".85"/>
<circle cx="188.0" cy="265" r="3" fill="#2c2a26"/>
<circle cx="188.0" cy="265" r="3.800" fill="none" stroke="#efeee8" stroke-width=".8" opacity=".8"/>
<rect x="174.5" y="261" width="4" height="9" fill="#d4d2ca"/>
<rect x="253" y="79" width="20" height="139" fill="url(#pinD)" stroke="#5d5b53" stroke-width=".6" stroke-opacity=".7"/>
<rect x="253" y="79" width="20" height="2" fill="#f2f1ec" opacity=".8"/>
<rect x="261.0" y="86" width="4" height="66" rx="1.500" fill="#40392e"/>
<rect x="252.5" y="107" width="2.500" height="6" fill="#4a4a44"/><rect x="271" y="107" width="2.500" height="6" fill="#4a4a44"/>
<rect x="252.5" y="119" width="2" height="3" fill="#4a4a44"/><rect x="271.5" y="119" width="2" height="3" fill="#4a4a44"/>
<path d="M254 218 H272 L272.5 226 L270 232 L270 246 L266.5 252 L266.5 256 L272.5 260 L272.5 272 L270 272 L269 279 L258 279 L257 272 L253.5 272 L253.5 260 L259.5 256 L259.5 252 L256 246 L256 232 L253.5 226 Z" fill="url(#crimp)"/>
<rect x="260.5" y="228" width="5" height="26" fill="#5e5a4c" opacity=".7"/>
<rect x="258.0" y="234.0" width="10" height="1.300" fill="#e4e2da" opacity=".85"/>
<rect x="258.0" y="237.6" width="10" height="1.300" fill="#e4e2da" opacity=".85"/>
<rect x="258.0" y="241.2" width="10" height="1.300" fill="#e4e2da" opacity=".85"/>
<rect x="258.0" y="244.8" width="10" height="1.300" fill="#e4e2da" opacity=".85"/>
<circle cx="263.0" cy="265" r="3" fill="#2c2a26"/>
<circle cx="263.0" cy="265" r="3.800" fill="none" stroke="#efeee8" stroke-width=".8" opacity=".8"/>
<rect x="249.5" y="261" width="4" height="9" fill="#d4d2ca"/>
<rect x="309" y="79" width="20" height="139" fill="url(#pinD)" stroke="#5d5b53" stroke-width=".6" stroke-opacity=".7"/>
<rect x="309" y="79" width="20" height="2" fill="#f2f1ec" opacity=".8"/>
<rect x="317.0" y="86" width="4" height="66" rx="1.500" fill="#40392e"/>
<rect x="308.5" y="107" width="2.500" height="6" fill="#4a4a44"/><rect x="327" y="107" width="2.500" height="6" fill="#4a4a44"/>
<rect x="308.5" y="119" width="2" height="3" fill="#4a4a44"/><rect x="327.5" y="119" width="2" height="3" fill="#4a4a44"/>
<path d="M310 218 H328 L328.5 226 L326 232 L326 246 L322.5 252 L322.5 256 L328.5 260 L328.5 272 L326 272 L325 279 L314 279 L313 272 L309.5 272 L309.5 260 L315.5 256 L315.5 252 L312 246 L312 232 L309.5 226 Z" fill="url(#crimp)"/>
<rect x="316.5" y="228" width="5" height="26" fill="#5e5a4c" opacity=".7"/>
<rect x="314.0" y="234.0" width="10" height="1.300" fill="#e4e2da" opacity=".85"/>
<rect x="314.0" y="237.6" width="10" height="1.300" fill="#e4e2da" opacity=".85"/>
<rect x="314.0" y="241.2" width="10" height="1.300" fill="#e4e2da" opacity=".85"/>
<rect x="314.0" y="244.8" width="10" height="1.300" fill="#e4e2da" opacity=".85"/>
<circle cx="319.0" cy="265" r="3" fill="#2c2a26"/>
<circle cx="319.0" cy="265" r="3.800" fill="none" stroke="#efeee8" stroke-width=".8" opacity=".8"/>
<rect x="305.5" y="261" width="4" height="9" fill="#d4d2ca"/>
<rect x="382" y="79" width="20" height="139" fill="url(#pinD)" stroke="#5d5b53" stroke-width=".6" stroke-opacity=".7"/>
<rect x="382" y="79" width="20" height="2" fill="#f2f1ec" opacity=".8"/>
<rect x="390.0" y="86" width="4" height="66" rx="1.500" fill="#40392e"/>
<rect x="381.5" y="107" width="2.500" height="6" fill="#4a4a44"/><rect x="400" y="107" width="2.500" height="6" fill="#4a4a44"/>
<rect x="381.5" y="119" width="2" height="3" fill="#4a4a44"/><rect x="400.5" y="119" width="2" height="3" fill="#4a4a44"/>
<path d="M383 218 H401 L401.5 226 L399 232 L399 246 L395.5 252 L395.5 256 L401.5 260 L401.5 272 L399 272 L398 279 L387 279 L386 272 L382.5 272 L382.5 260 L388.5 256 L388.5 252 L385 246 L385 232 L382.5 226 Z" fill="url(#crimp)"/>
<rect x="389.5" y="228" width="5" height="26" fill="#5e5a4c" opacity=".7"/>
<rect x="387.0" y="234.0" width="10" height="1.300" fill="#e4e2da" opacity=".85"/>
<rect x="387.0" y="237.6" width="10" height="1.300" fill="#e4e2da" opacity=".85"/>
<rect x="387.0" y="241.2" width="10" height="1.300" fill="#e4e2da" opacity=".85"/>
<rect x="387.0" y="244.8" width="10" height="1.300" fill="#e4e2da" opacity=".85"/>
<circle cx="392.0" cy="265" r="3" fill="#2c2a26"/>
<circle cx="392.0" cy="265" r="3.800" fill="none" stroke="#efeee8" stroke-width=".8" opacity=".8"/>
<rect x="378.5" y="261" width="4" height="9" fill="#d4d2ca"/>
<rect x="428" y="79" width="19" height="139" fill="url(#pinD)" stroke="#5d5b53" stroke-width=".6" stroke-opacity=".7"/>
<rect x="428" y="79" width="19" height="2" fill="#f2f1ec" opacity=".8"/>
<rect x="435.5" y="86" width="4" height="66" rx="1.500" fill="#40392e"/>
<rect x="427.5" y="107" width="2.500" height="6" fill="#4a4a44"/><rect x="445" y="107" width="2.500" height="6" fill="#4a4a44"/>
<rect x="427.5" y="119" width="2" height="3" fill="#4a4a44"/><rect x="445.5" y="119" width="2" height="3" fill="#4a4a44"/>
<path d="M429 218 H446 L446.5 226 L444 232 L444 246 L441.0 252 L441.0 256 L446.5 260 L446.5 272 L444 272 L443 279 L433 279 L432 272 L428.5 272 L428.5 260 L434.0 256 L434.0 252 L431 246 L431 232 L428.5 226 Z" fill="url(#crimp)"/>
<rect x="435.0" y="228" width="5" height="26" fill="#5e5a4c" opacity=".7"/>
<rect x="432.5" y="234.0" width="10" height="1.300" fill="#e4e2da" opacity=".85"/>
<rect x="432.5" y="237.6" width="10" height="1.300" fill="#e4e2da" opacity=".85"/>
<rect x="432.5" y="241.2" width="10" height="1.300" fill="#e4e2da" opacity=".85"/>
<rect x="432.5" y="244.8" width="10" height="1.300" fill="#e4e2da" opacity=".85"/>
<circle cx="437.5" cy="265" r="3" fill="#2c2a26"/>
<circle cx="437.5" cy="265" r="3.800" fill="none" stroke="#efeee8" stroke-width=".8" opacity=".8"/>
<rect x="424.5" y="261" width="4" height="9" fill="#d4d2ca"/>
<rect x="485" y="79" width="19" height="139" fill="url(#pinL)" stroke="#5d5b53" stroke-width=".6" stroke-opacity=".7"/>
<rect x="485" y="79" width="19" height="2" fill="#f2f1ec" opacity=".8"/>
<rect x="492.5" y="86" width="4" height="66" rx="1.500" fill="#40392e"/>
<rect x="484.5" y="107" width="2.500" height="6" fill="#4a4a44"/><rect x="502" y="107" width="2.500" height="6" fill="#4a4a44"/>
<rect x="484.5" y="119" width="2" height="3" fill="#4a4a44"/><rect x="502.5" y="119" width="2" height="3" fill="#4a4a44"/>
<path d="M486 218 H503 L503.5 226 L501 232 L501 246 L498.0 252 L498.0 256 L503.5 260 L503.5 272 L501 272 L500 279 L490 279 L489 272 L485.5 272 L485.5 260 L491.0 256 L491.0 252 L488 246 L488 232 L485.5 226 Z" fill="url(#crimp)"/>
<rect x="492.0" y="228" width="5" height="26" fill="#5e5a4c" opacity=".7"/>
<rect x="489.5" y="234.0" width="10" height="1.300" fill="#e4e2da" opacity=".85"/>
<rect x="489.5" y="237.6" width="10" height="1.300" fill="#e4e2da" opacity=".85"/>
<rect x="489.5" y="241.2" width="10" height="1.300" fill="#e4e2da" opacity=".85"/>
<rect x="489.5" y="244.8" width="10" height="1.300" fill="#e4e2da" opacity=".85"/>
<circle cx="494.5" cy="265" r="3" fill="#2c2a26"/>
<circle cx="494.5" cy="265" r="3.800" fill="none" stroke="#efeee8" stroke-width=".8" opacity=".8"/>
<rect x="481.5" y="261" width="4" height="9" fill="#d4d2ca"/>
<rect x="541" y="79" width="19" height="139" fill="url(#pinL)" stroke="#5d5b53" stroke-width=".6" stroke-opacity=".7"/>
<rect x="541" y="79" width="19" height="2" fill="#f2f1ec" opacity=".8"/>
<rect x="548.5" y="86" width="4" height="66" rx="1.500" fill="#40392e"/>
<rect x="540.5" y="107" width="2.500" height="6" fill="#4a4a44"/><rect x="558" y="107" width="2.500" height="6" fill="#4a4a44"/>
<rect x="540.5" y="119" width="2" height="3" fill="#4a4a44"/><rect x="558.5" y="119" width="2" height="3" fill="#4a4a44"/>
<path d="M542 218 H559 L559.5 226 L557 232 L557 246 L554.0 252 L554.0 256 L559.5 260 L559.5 272 L557 272 L556 279 L546 279 L545 272 L541.5 272 L541.5 260 L547.0 256 L547.0 252 L544 246 L544 232 L541.5 226 Z" fill="url(#crimp)"/>
<rect x="548.0" y="228" width="5" height="26" fill="#5e5a4c" opacity=".7"/>
<rect x="545.5" y="234.0" width="10" height="1.300" fill="#e4e2da" opacity=".85"/>
<rect x="545.5" y="237.6" width="10" height="1.300" fill="#e4e2da" opacity=".85"/>
<rect x="545.5" y="241.2" width="10" height="1.300" fill="#e4e2da" opacity=".85"/>
<rect x="545.5" y="244.8" width="10" height="1.300" fill="#e4e2da" opacity=".85"/>
<circle cx="550.5" cy="265" r="3" fill="#2c2a26"/>
<circle cx="550.5" cy="265" r="3.800" fill="none" stroke="#efeee8" stroke-width=".8" opacity=".8"/>
<rect x="537.5" y="261" width="4" height="9" fill="#d4d2ca"/>
<rect x="609" y="79" width="19" height="139" fill="url(#pinL)" stroke="#5d5b53" stroke-width=".6" stroke-opacity=".7"/>
<rect x="609" y="79" width="19" height="2" fill="#f2f1ec" opacity=".8"/>
<rect x="616.5" y="86" width="4" height="66" rx="1.500" fill="#40392e"/>
<rect x="608.5" y="107" width="2.500" height="6" fill="#4a4a44"/><rect x="626" y="107" width="2.500" height="6" fill="#4a4a44"/>
<rect x="608.5" y="119" width="2" height="3" fill="#4a4a44"/><rect x="626.5" y="119" width="2" height="3" fill="#4a4a44"/>
<path d="M610 218 H627 L627.5 226 L625 232 L625 246 L622.0 252 L622.0 256 L627.5 260 L627.5 272 L625 272 L624 279 L614 279 L613 272 L609.5 272 L609.5 260 L615.0 256 L615.0 252 L612 246 L612 232 L609.5 226 Z" fill="url(#crimp)"/>
<rect x="616.0" y="228" width="5" height="26" fill="#5e5a4c" opacity=".7"/>
<rect x="613.5" y="234.0" width="10" height="1.300" fill="#e4e2da" opacity=".85"/>
<rect x="613.5" y="237.6" width="10" height="1.300" fill="#e4e2da" opacity=".85"/>
<rect x="613.5" y="241.2" width="10" height="1.300" fill="#e4e2da" opacity=".85"/>
<rect x="613.5" y="244.8" width="10" height="1.300" fill="#e4e2da" opacity=".85"/>
<circle cx="618.5" cy="265" r="3" fill="#2c2a26"/>
<circle cx="618.5" cy="265" r="3.800" fill="none" stroke="#efeee8" stroke-width=".8" opacity=".8"/>
<rect x="605.5" y="261" width="4" height="9" fill="#d4d2ca"/>
<rect x="0" y="78" width="618" height="204" filter="url(#grain)" opacity=".18"/>
<rect x="0" y="0" width="618" height="22" fill="url(#tb)"/>
<rect x="40" y="2.0" width="540" height=".8" fill="#fff" opacity=".07"/>
<rect x="40" y="4.3" width="540" height=".8" fill="#fff" opacity=".07"/>
<rect x="40" y="6.6" width="540" height=".8" fill="#fff" opacity=".07"/>
<rect x="40" y="8.9" width="540" height=".8" fill="#fff" opacity=".07"/>
<rect x="40" y="11.2" width="540" height=".8" fill="#fff" opacity=".07"/>
<rect x="40" y="13.5" width="540" height=".8" fill="#fff" opacity=".07"/>
<rect x="40" y="15.8" width="540" height=".8" fill="#fff" opacity=".07"/>
<rect x="40" y="18.1" width="540" height=".8" fill="#fff" opacity=".07"/>
<rect x="0" y="0" width="618" height="22" fill="url(#tbv)"/>
<path d="M168 0l9 21M228 0l-3 21" stroke="#c9d0d6" stroke-width=".8" opacity=".7"/>
<rect x="0" y="20.500" width="618" height="2" fill="#4c514e" opacity=".8"/>
<rect x="0" y="331" width="618" height="23" fill="url(#bb)"/>
<rect x="0" y="330" width="187" height="24" fill="#060606"/>
<path d="M1 332 H100 L70 345 H1 Z" fill="#3d3d3d" filter="url(#b15)"/>
<ellipse cx="30" cy="338" rx="11" ry="6.500" fill="#cfcfcf" opacity=".9" filter="url(#b2)"/>
<ellipse cx="69" cy="338" rx="7" ry="6" fill="#bdbdbd" opacity=".85" filter="url(#b2)"/>
<rect x="10" y="347" width="160" height="7" fill="url(#blk)"/>
<rect x="0" y="330" width="618" height="1.500" fill="#3c403c" opacity=".7"/>
<rect x="186" y="331" width="1.500" height="23" fill="#c8ccd0" opacity=".8"/>
<rect x="187" y="352.500" width="431" height="1.500" fill="#9ba0a6" opacity=".6"/>
</g></svg>

<div class="abs" style="left:300px;top:604px;width:618px;height:45px;background:#fafafa;border-bottom:1px solid #ededed"></div>
<div class="t" style="letter-spacing:0.339px;left:313px;top:617px;color:#1a1a1a;-webkit-text-stroke:.15px #1a1a1a">Navigation</div>
<div class="t" style="letter-spacing:-0.228px;left:874px;top:617px;color:#1a1a1a;-webkit-text-stroke:.15px #1a1a1a">1 / 2</div>
<div class="abs" style="left:313px;top:663px;width:290px;height:36px;background:#f5f5f5;border:1px solid #d9d9d9;border-radius:7px"></div>
<svg class="abs" style="left:431px;top:674px" width="10" height="14" viewBox="0 0 10 14" fill="none" stroke="#b8b8b8" stroke-width="1.300" stroke-linecap="round" stroke-linejoin="round"><path d="M8.500 1.500L2 7l6.500 5.500"/></svg>
<div class="t" style="letter-spacing:0.023px;left:454px;top:671px;color:#bfbfbf">Prev</div>
<div class="pbtn" style="left:614px;top:663px;width:290px;height:36px"></div>
<div class="t" style="letter-spacing:0.273px;left:730px;top:671px;color:#fff">Next</div>
<svg class="abs" style="left:776px;top:674px" width="10" height="14" viewBox="0 0 10 14" fill="none" stroke="#fff" stroke-width="1.400" stroke-linecap="round" stroke-linejoin="round"><path d="M1.500 1.500L8 7l-6.500 5.500"/></svg>
<div class="abs" style="left:313px;top:713px;width:591px;height:1px;background:#ededed"></div>
<div class="t" style="letter-spacing:-0.114px;left:313px;top:726.500px;color:#474747"><b>Capture ID:</b> 4444 (Manual)</div>
<div class="t" style="letter-spacing:-0.161px;left:313px;top:750.500px;color:#474747"><b>Capture Time:</b> 2025-10-30 07:40:41.165 / 7 days ago</div>
<div class="t" style="letter-spacing:0.075px;left:313px;top:774.500px;color:#474747"><b>Capture Notes:</b> <span style="color:#9a9a9a">No notes for this capture.</span></div>

<!-- RIGHT CARD -->
<div class="card" style="left:957px;top:125px;width:943px;height:507px"></div>
<div class="t" style="letter-spacing:-0.206px;left:983px;top:144px;font-size:18px;line-height:22px;height:22px;color:#141414">Rules</div>
<div class="abs" style="left:957px;top:187.500px;width:943px;height:1px;background:#f0f0f0"></div>

<div class="sel2" style="left:977px;top:218px;width:541px"><svg class="arr" viewBox="0 0 13 13" fill="none" stroke="#bdbdbd" stroke-width="1.200" stroke-linecap="round" stroke-linejoin="round"><path d="M1.500 3.500l5 6 5-6"/></svg></div>
<div class="abs" style="left:982px;top:222.500px;width:236px;height:26px;background:#f0f0f0;border-radius:4px"></div>
<div class="t" style="letter-spacing:0.028px;left:992px;top:225.500px;color:#1f1f1f">Visual and Dimension Check</div>
<svg class="abs" style="left:1202px;top:230.500px" width="10" height="10" viewBox="0 0 10 10" stroke="#8c8c8c" stroke-width="1.100" stroke-linecap="round"><path d="M1 1l8 8M9 1l-8 8"/></svg>
<svg class="abs" style="left:1529px;top:227px" width="15" height="17" viewBox="0 0 15 17" fill="none" stroke="#d9141f" stroke-width="1.300" stroke-linejoin="round"><path d="M1 4h13M5 3.800V1.800h5v2M2.800 4.200V15.200h9.400V4.200"/></svg>

<div class="abs" style="left:986px;top:262px;width:2px;height:103px;background:#d9d9d9"></div>
<div class="abs" style="left:986px;top:299.500px;width:11px;height:2px;background:#d9d9d9"></div>
<div class="abs" style="left:986px;top:363px;width:11px;height:2px;background:#d9d9d9"></div>

<div class="sel2" style="left:1005px;top:281px;width:172px"><svg class="arr" viewBox="0 0 13 13" fill="none" stroke="#bdbdbd" stroke-width="1.200" stroke-linecap="round" stroke-linejoin="round"><path d="M1.500 3.500l5 6 5-6"/></svg></div>
<div class="abs" style="left:1018px;top:292.500px;width:12px;height:12px;background:#f00b0b"></div>
<div class="t" style="letter-spacing:0.292px;left:1036.500px;top:288.500px;color:#1f1f1f">Defect</div>
<div class="sel2" style="left:1188px;top:281px;width:172px"><svg class="arr" viewBox="0 0 13 13" fill="none" stroke="#bdbdbd" stroke-width="1.200" stroke-linecap="round" stroke-linejoin="round"><path d="M1.500 3.500l5 6 5-6"/></svg></div>
<div class="t" style="letter-spacing:0.016px;left:1201.500px;top:288.500px;color:#1f1f1f">Pixel Count</div>
<div class="sel2" style="left:1371px;top:281px;width:135px"><svg class="arr" viewBox="0 0 13 13" fill="none" stroke="#bdbdbd" stroke-width="1.200" stroke-linecap="round" stroke-linejoin="round"><path d="M1.500 3.500l5 6 5-6"/></svg></div>
<div class="t" style="letter-spacing:0.073px;left:1385px;top:288.500px;color:#1f1f1f">All</div>
<div class="sel2" style="left:1518px;top:281px;width:135px"><svg class="arr" viewBox="0 0 13 13" fill="none" stroke="#bdbdbd" stroke-width="1.200" stroke-linecap="round" stroke-linejoin="round"><path d="M1.500 3.500l5 6 5-6"/></svg></div>
<div class="t" style="left:1531px;top:288.500px;color:#1f1f1f">&lt;</div>
<div class="sel2" style="left:1664px;top:281px;width:172px"></div>
<div class="t" style="letter-spacing:-0.398px;left:1678px;top:288.500px;color:#1f1f1f">10</div>
<svg class="abs" style="left:1859px;top:292px" width="13" height="13" viewBox="0 0 13 13" stroke="#141414" stroke-width="1.700" stroke-linecap="round"><path d="M1.200 1.200l10.600 10.600M11.800 1.200L1.200 11.800"/></svg>

<div class="dash" style="left:1005px;top:343px;width:831px;height:36px"></div>
<svg class="abs" style="left:1379px;top:355px" width="13" height="13" viewBox="0 0 13 13" stroke="#1f1f1f" stroke-width="1.400" stroke-linecap="round"><path d="M6.500 .7v11.600M.7 6.500h11.600"/></svg>
<div class="t" style="letter-spacing:0.051px;left:1403px;top:351px;color:#1f1f1f">Add rule</div>

<div class="abs" style="left:982px;top:433px;width:891px;height:1px;background:#f0f0f0"></div>
<div class="dash" style="left:982px;top:461px;width:891px;height:36px"></div>
<svg class="abs" style="left:1363px;top:473px" width="13" height="13" viewBox="0 0 13 13" stroke="#1f1f1f" stroke-width="1.400" stroke-linecap="round"><path d="M6.500 .7v11.600M.7 6.500h11.600"/></svg>
<div class="t" style="letter-spacing:0.145px;left:1387px;top:469px;color:#1f1f1f">Add rule group</div>
<div class="abs" style="left:982px;top:551px;width:891px;height:1px;background:#f0f0f0"></div>
<div class="pbtn" style="left:1732px;top:579px;width:141px;height:36px;box-shadow:0 2px 0 rgba(114,46,209,.1)"></div>
<div class="t" style="letter-spacing:-0.065px;left:1750px;top:587px;color:#fff">Save &amp; Deploy</div>

<!-- FAB -->
<div class="abs" style="left:1848px;top:1002px;width:45px;height:45px;border-radius:50%;background:#722ed1;box-shadow:0 6px 16px rgba(0,0,0,.08),0 3px 6px -4px rgba(0,0,0,.12),0 9px 28px 8px rgba(0,0,0,.05)"></div>
<svg class="abs" style="left:1860px;top:1014.600px" width="21" height="21" viewBox="0 0 21 21" fill="none" stroke="#fff" stroke-width="1.700" stroke-linecap="round"><circle cx="10.500" cy="10.500" r="9.500"/><path d="M7.800 8.400c0-1.600 1.200-2.600 2.700-2.600s2.700 1 2.700 2.400c0 1.900-2.700 2-2.700 4.100"/><circle cx="10.500" cy="15.300" r=".6" fill="#fff"/></svg>

<!-- window corners -->
<svg class="abs" style="left:1908px;top:1089px" width="12" height="12" viewBox="0 0 12 12"><path d="M12 0V12H0A12 12 0 0 0 12 0Z" fill="#3a100c"/></svg>
<svg class="abs" style="left:0;top:1089px" width="12" height="12" viewBox="0 0 12 12"><path d="M0 0V12H12A12 12 0 0 1 0 0Z" fill="#05080d"/></svg>
</body>
</html>
